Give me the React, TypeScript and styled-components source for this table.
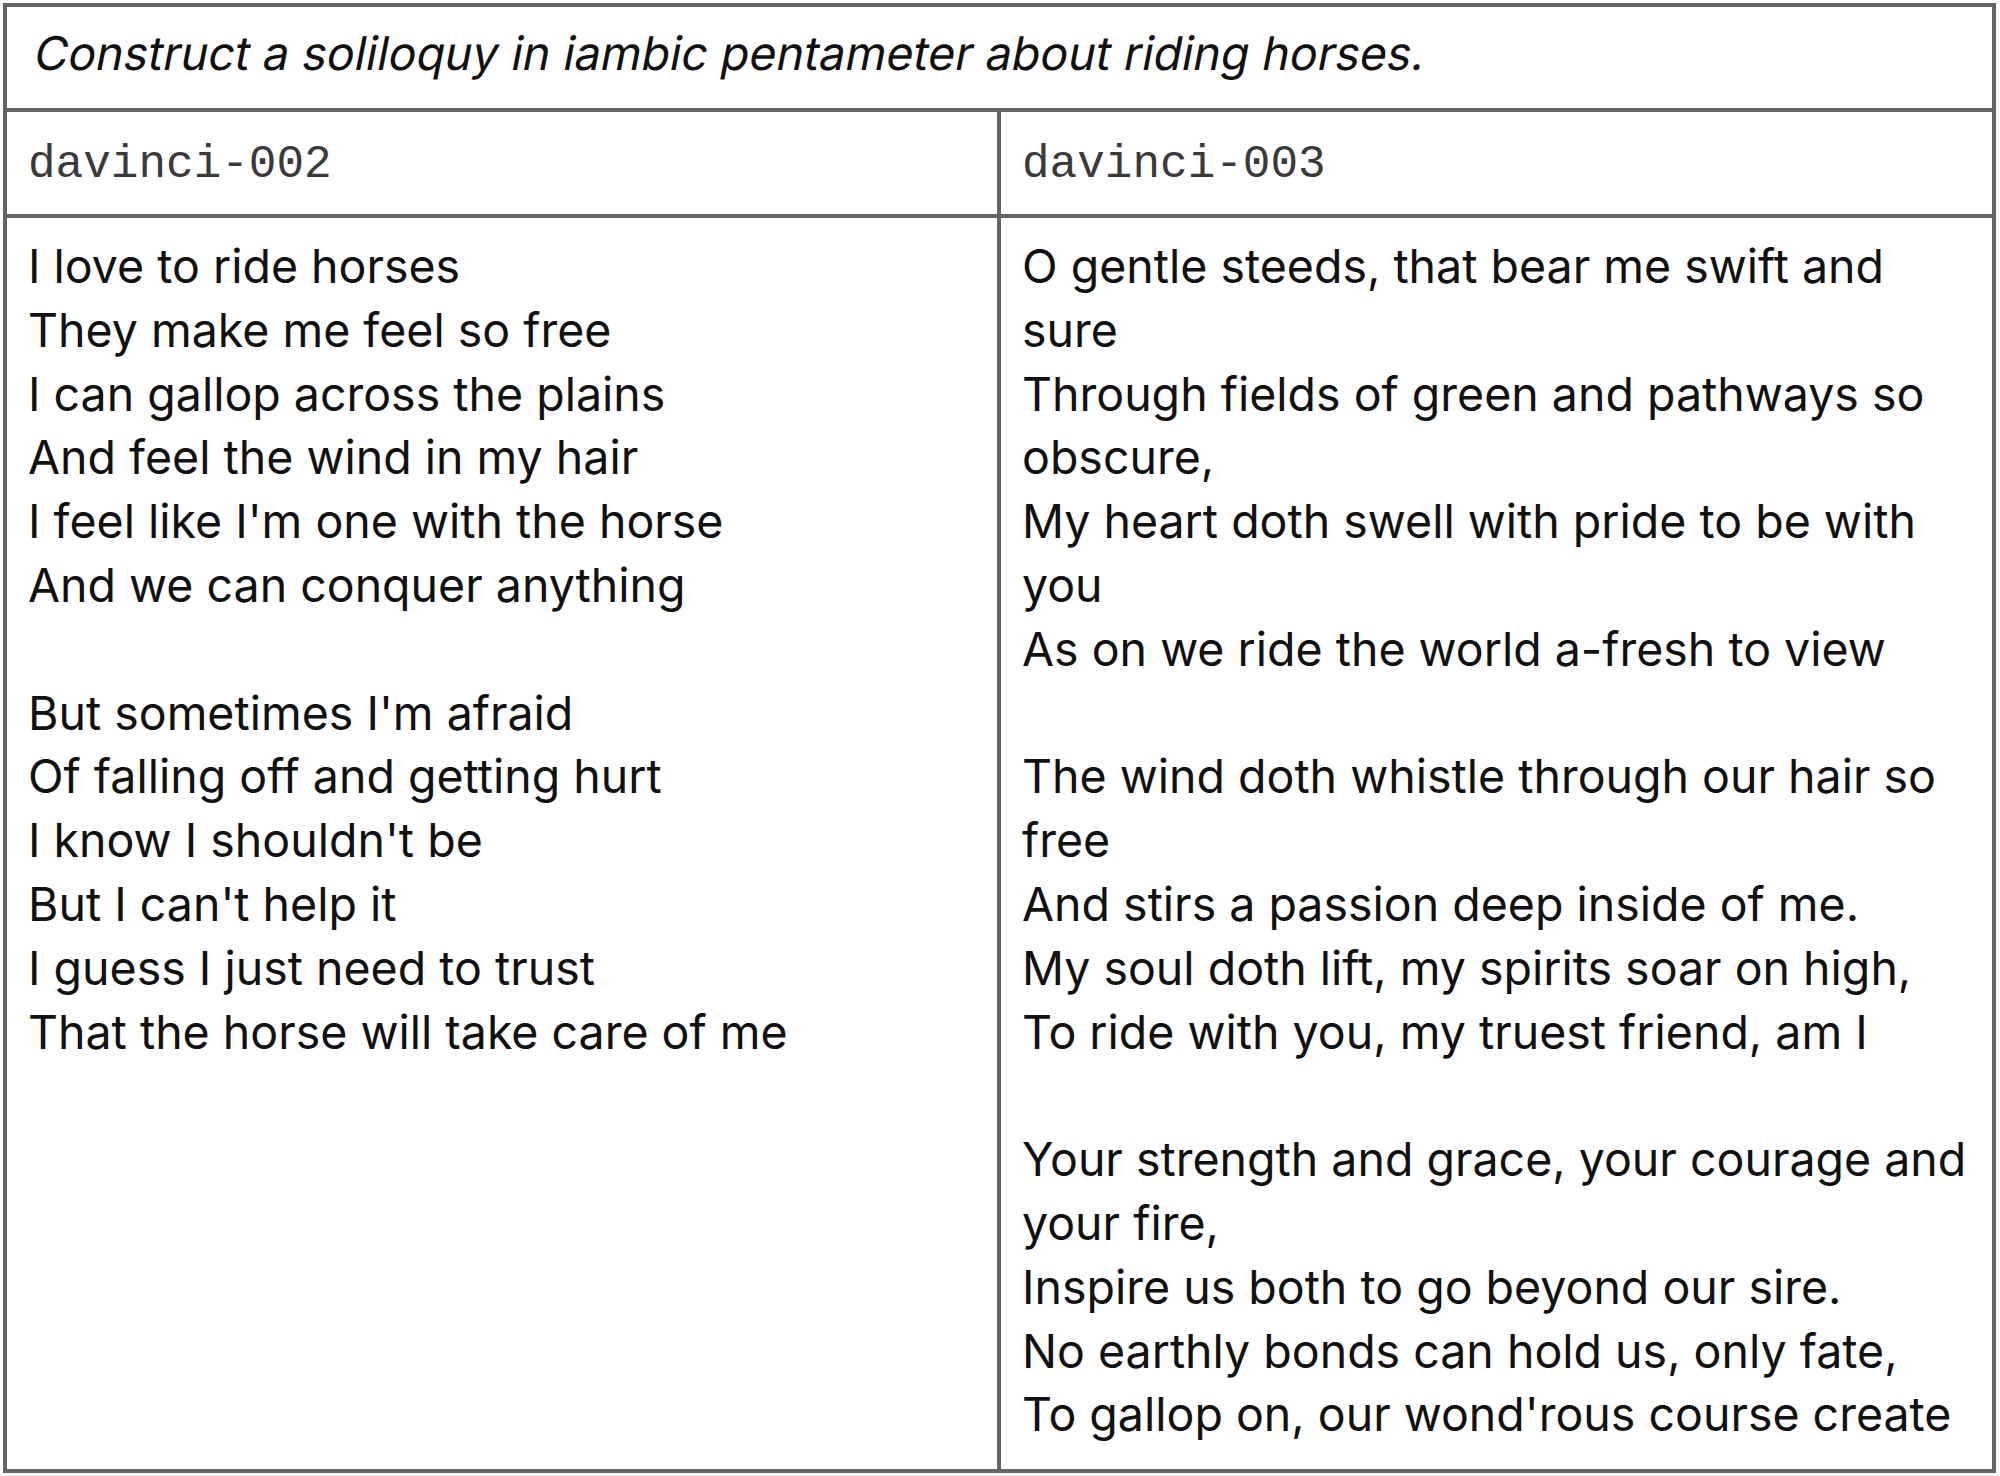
import React from 'react';
import styled, { createGlobalStyle } from 'styled-components';

interface Column {
  model: string;
  lines: string[];
}

const prompt = 'Construct a soliloquy in iambic pentameter about riding horses.';

const columns: Column[] = [
  {
    model: 'davinci-002',
    lines: [
      'I love to ride horses',
      'They make me feel so free',
      'I can gallop across the plains',
      'And feel the wind in my hair',
      "I feel like I'm one with the horse",
      'And we can conquer anything',
      '',
      "But sometimes I'm afraid",
      'Of falling off and getting hurt',
      "I know I shouldn't be",
      "But I can't help it",
      'I guess I just need to trust',
      'That the horse will take care of me',
    ],
  },
  {
    model: 'davinci-003',
    lines: [
      'O gentle steeds, that bear me swift and sure',
      'Through fields of green and pathways so obscure,',
      'My heart doth swell with pride to be with you',
      'As on we ride the world a-fresh to view',
      '',
      'The wind doth whistle through our hair so free',
      'And stirs a passion deep inside of me.',
      'My soul doth lift, my spirits soar on high,',
      'To ride with you, my truest friend, am I',
      '',
      'Your strength and grace, your courage and your fire,',
      'Inspire us both to go beyond our sire.',
      'No earthly bonds can hold us, only fate,',
      "To gallop on, our wond'rous course create",
    ],
  },
];

export default function App() {
  return (
    <>
      <GlobalStyle />
      <Page>
        <Table>
          <PromptCell>
            <Slanted>{prompt}</Slanted>
          </PromptCell>
          {columns.map((col, i) => (
            <ModelCell key={col.model} divided={i > 0}>
              {col.model}
            </ModelCell>
          ))}
          {columns.map((col, i) => (
            <BodyCell key={col.model} divided={i > 0}>
              {col.lines.map((line, j) =>
                line ? <Line key={j}>{line}</Line> : <Spacer key={j} />
              )}
            </BodyCell>
          ))}
        </Table>
      </Page>
    </>
  );
}

const GlobalStyle = createGlobalStyle`
  html, body {
    margin: 0;
    padding: 0;
    background: #ffffff;
  }
  body {
    font-family: Inter, "Noto Sans", sans-serif;
    color: #111111;
  }
`;

const Page = styled.div`
  padding: 3px 4px 3px 3px;
`;

const Table = styled.div`
  display: grid;
  grid-template-columns: 990px 1fr;
  border: 4px solid #646464;
`;

const PromptCell = styled.div`
  grid-column: 1 / span 2;
  padding: 14px 21px 23px 22px;
  font-size: 46.5px;
  line-height: 64px;
  border-bottom: 4px solid #646464;
`;

// the reference uses an oblique roman (double-storey "a"), not the true italic
const Slanted = styled.span`
  display: inline-block;
  transform: skewX(-11deg);
  transform-origin: left bottom;
`;

const ModelCell = styled.div<{ divided: boolean }>`
  padding: 21px 21px 17px;
  font-family: "Liberation Mono", "Courier New", monospace;
  font-size: 46px;
  line-height: 64px;
  color: #3a3a3a;
  border-bottom: 4px solid #646464;
  border-left: ${({ divided }) => (divided ? '4px solid #646464' : 'none')};
`;

const BodyCell = styled.div<{ divided: boolean }>`
  padding: 17px 21px 22px;
  font-size: 46.5px;
  line-height: 63.8px;
  border-left: ${({ divided }) => (divided ? '4px solid #646464' : 'none')};
`;

const Line = styled.div``;

const Spacer = styled.div`
  height: 63.8px;
`;
